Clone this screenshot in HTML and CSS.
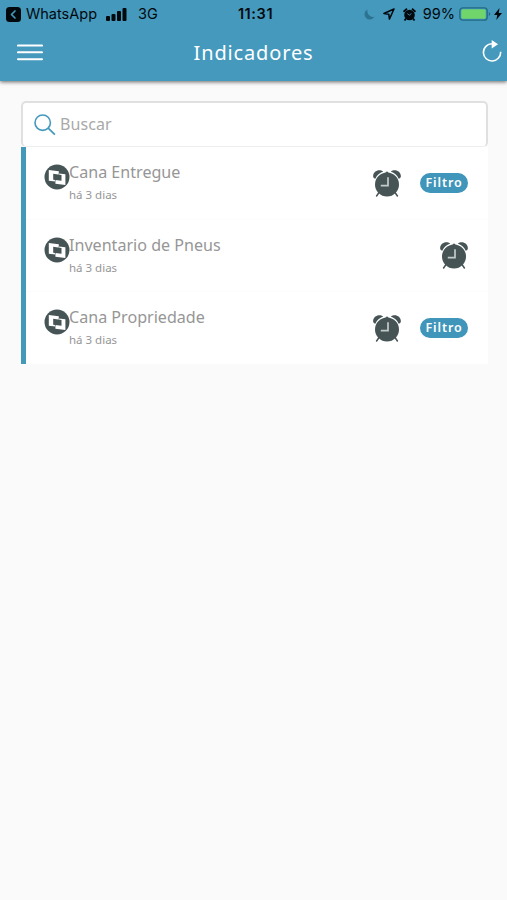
FILE: index.html
```html
<!DOCTYPE html>
<html lang="pt-BR">
<head>
<meta charset="utf-8">
<meta name="viewport" content="width=device-width, initial-scale=1">
<title>Indicadores</title>
<link rel="stylesheet" href="styles.css">
</head>
<body>
<svg class="defs" aria-hidden="true">
  <symbol id="alarm" viewBox="0 0 28 28">
    <path d="M.3 8.300C-1 2.500 6 -1 10.300 2.600Q4.700 4.600 2.300 9.700Q1 9.700.3 8.300ZM27.700 8.300C29 2.500 22 -1 17.700 2.600Q23.300 4.600 25.700 9.700Q27 9.700 27.700 8.300Z" fill="#465456"/>
    <path d="M6 23.500L3.600 27M22 23.500l2.400 3.500" stroke="#465456" stroke-width="1.500" stroke-linecap="round"/>
    <circle cx="14" cy="15.500" r="12" fill="#465456"/>
    <path d="M12 4.200L14 2.200l2 2Z" fill="#465456"/>
    <path d="M15 8.300v8.400H7.800" fill="none" stroke="#c3caca" stroke-width="1.700"/>
  </symbol>
  <symbol id="brand" viewBox="0 0 26 26">
    <circle cx="13" cy="13" r="12.500" fill="#465456"/>
    <path d="M4.800 6l10 1.200v2.200l6.600.8v10.700l-10-1.200v-2.200l-6.600-.8Z" fill="#fff"/>
    <path d="M9.200 9.800l8.300 1.100v5.900l-8.300-1.100Z" fill="#465456"/>
    <path d="M14.800 9.400v1.200M11.400 17.500v-1.700" stroke="#465456" stroke-width=".6"/>
  </symbol>
</svg>
<header class="header">
  <div class="status">
    <div class="status-left">
      <svg class="back" viewBox="0 0 15 15"><rect width="15" height="15" rx="3.500" fill="#02090d"/><path d="M9 4L5.500 7.500 9 11" fill="none" stroke="#4599bd" stroke-width="1.700" stroke-linecap="round" stroke-linejoin="round"/></svg>
      <span class="carrier">WhatsApp</span>
      <svg class="signal" viewBox="0 0 21 13"><g fill="#02090d"><rect y="8" width="4" height="5" rx="1"/><rect x="5.500" y="6" width="4" height="7" rx="1"/><rect x="11" y="3" width="4" height="10" rx="1"/><rect x="16.500" width="4" height="13" rx="1"/></g></svg>
      <span class="network">3G</span>
    </div>
    <div class="time">11:31</div>
    <div class="status-right">
      <svg class="moon" viewBox="0 0 11 11"><path d="M3.500.5A5.300 5.300 0 1 0 10.500 7.800 6 6 0 0 1 3.500.5Z" fill="#2c7390"/></svg>
      <svg class="arrow" viewBox="0 0 12 12"><path d="M11 1L.9 5.500l4.900.7.600 4.900Z" fill="none" stroke="#02090d" stroke-width="1.500" stroke-linejoin="round"/></svg>
      <svg class="mini-alarm" viewBox="0 0 13 13"><path d="M.5 3.800L4 .8M12.500 3.800L9 .8M3 10.500l-1.500 2M10 10.500l1.500 2" stroke="#02090d" stroke-width="1.800"/><circle cx="6.500" cy="7" r="5.300" fill="#02090d"/><path d="M4.300 5.600l2.400 1.700 1.500-2" fill="none" stroke="#4599bd" stroke-width=".8"/></svg>
      <span class="percent">99%</span>
      <svg class="battery" viewBox="0 0 32 14"><rect x=".8" y=".8" width="27.400" height="12.400" rx="3" fill="none" stroke="#236985" stroke-width="1.300"/><rect x="2.300" y="2.300" width="24.400" height="9.400" rx="1.500" fill="#70d66b"/><path d="M29.800 5q3 2 0 4Z" fill="#236985"/></svg>
      <svg class="bolt" viewBox="0 0 8 12"><path d="M5.500 0L0 7h3.300L2.300 12 8 4.900H4.700Z" fill="#02090d"/></svg>
    </div>
  </div>
  <nav class="toolbar">
    <svg class="menu" viewBox="0 0 26 17"><path d="M1 1.500h24M1 8.300h24M1 15.200h24" stroke="#fff" stroke-width="2.100" stroke-linecap="round"/></svg>
    <h1 class="title">Indicadores</h1>
    <svg class="refresh" viewBox="0 0 20 22"><path d="M18.600 11.700A8.600 8.600 0 1 1 10 3.800" fill="none" stroke="#fff" stroke-width="1.600"/><path d="M9.700 0l6.400 4.200-6.400 4.300Z" fill="#fff"/></svg>
  </nav>
</header>
<main class="content">
  <label class="search">
    <svg class="lens" viewBox="0 0 22 22"><circle cx="8.700" cy="8.700" r="7.700" fill="none" stroke="#4599bd" stroke-width="1.600"/><path d="M14.200 14.200l6.700 6.500" stroke="#4599bd" stroke-width="1.800"/></svg>
    <span class="placeholder">Buscar</span>
  </label>
  <ul class="list">
    <li class="item">
      <svg class="brand"><use href="#brand"/></svg>
      <div class="text"><span class="name">Cana Entregue</span><span class="ago">há 3 dias</span></div>
      <svg class="alarm"><use href="#alarm"/></svg>
      <span class="badge">Filtro</span>
    </li>
    <li class="item">
      <svg class="brand"><use href="#brand"/></svg>
      <div class="text"><span class="name">Inventario de Pneus</span><span class="ago">há 3 dias</span></div>
      <svg class="alarm"><use href="#alarm"/></svg>
    </li>
    <li class="item">
      <svg class="brand"><use href="#brand"/></svg>
      <div class="text"><span class="name">Cana Propriedade</span><span class="ago">há 3 dias</span></div>
      <svg class="alarm"><use href="#alarm"/></svg>
      <span class="badge">Filtro</span>
    </li>
  </ul>
</main>
</body>
</html>
```
FILE: styles.css
```css
* { box-sizing: border-box; }
body { margin: 0; min-height: 900px; background: #fafafa; font-family: "Noto Sans", "Open Sans", sans-serif; }
svg { display: block; flex: none; }
.defs { display: none; }
.header { height: 81px; background: #4599bd; box-shadow: 0 1px 4px rgba(0, 0, 0, .6); }
.status { display: grid; grid-template-columns: 1fr auto 1fr; align-items: center; height: 28px; padding: 0 5px 0 6px; color: #02090d; font: 14.5px/28px Inter, sans-serif; }
.status-left, .status-right { display: flex; align-items: center; }
.status-right { justify-content: flex-end; }
.back { width: 15px; height: 15px; margin-right: 5px; }
.carrier { width: 80px; }
.signal { width: 21px; height: 13px; margin-right: 11px; }
.time { padding-left: 3px; font-weight: 600; letter-spacing: .6px; }
.moon { width: 11px; height: 11px; margin-right: 8px; }
.arrow { width: 12px; height: 12px; margin-right: 8px; }
.mini-alarm { width: 13px; height: 13px; margin-right: 7px; }
.battery { width: 32px; height: 14px; margin: 0 3px 0 4px; }
.bolt { width: 8px; height: 12px; }
.toolbar { display: grid; grid-template-columns: 1fr auto 1fr; align-items: center; height: 49px; }
.menu { width: 26px; height: 17px; margin-left: 17px; }
.title { margin: 0; color: #fff; font-size: 20px; line-height: 28px; font-weight: 400; letter-spacing: .85px; }
.refresh { width: 20px; height: 22px; margin: -3px 5px 0 0; justify-self: end; }
.content { padding: 20px 19px 0 21px; }
.search { display: flex; align-items: center; height: 46px; padding-left: 11px; background: #fff; border: 2px solid #e0e0e0; border-bottom: 1px solid #eee; border-radius: 5px; }
.lens { width: 22px; height: 22px; margin-right: 4px; }
.placeholder { margin-top: -1px; color: #a9a9a9; font-size: 16px; letter-spacing: .1px; }
.list { margin: 0; padding: 0; list-style: none; background: #fff; border-left: 5px solid #4599b8; }
.item { display: flex; align-items: center; height: 72px; padding: 0 20px 1px 18px; }
.item + .item { height: 72.4px; border-top: 1px solid #fcfcfc; }
.brand { width: 26px; height: 26px; margin-top: -11px; }
.text { display: flex; flex: 1; flex-direction: column; align-self: flex-start; margin-left: -1px; padding-top: 13px; color: #969696; white-space: nowrap; }
.item + .item .text { padding-top: 12.5px; }
.name { font-size: 16.1px; line-height: 24px; }
.ago { margin-top: 2px; font-size: 11.5px; line-height: 18px; }
.alarm { width: 28px; height: 28px; }
.badge { width: 48px; height: 20px; margin-left: 19px; border-radius: 10px; background: #3f95ba; color: #fff; font-size: 12.500px; font-weight: 600; line-height: 20px; letter-spacing: .9px; text-align: center; }
```
